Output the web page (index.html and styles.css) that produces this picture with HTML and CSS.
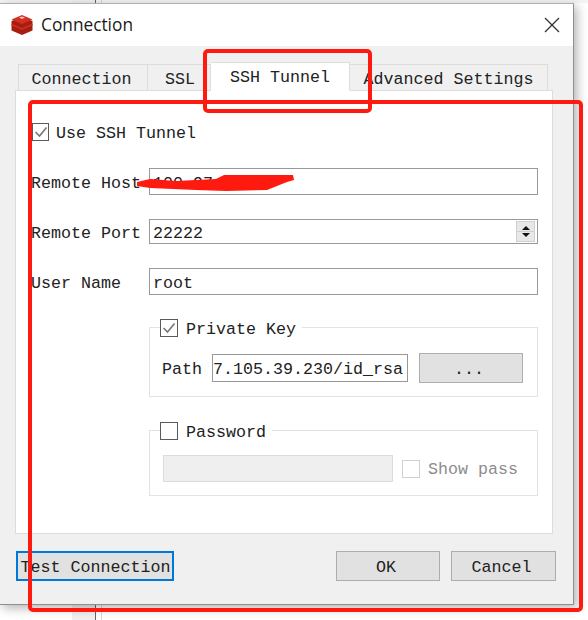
FILE: index.html
```html
<!DOCTYPE html>
<html lang="en">
<head>
<meta charset="utf-8">
<title>Connection</title>
<link rel="stylesheet" href="styles.css">
</head>
<body>
<div class="backdrop-top"><span class="bd-block"></span><span class="bd-line"></span><span class="bd-line2"></span></div>
<div class="window">
  <div class="titlebar">
    <svg class="app-icon" width="24" height="22" viewBox="0 0 24 22">
      <path d="M12 3 22.500 7v9.500L12 21 1.500 16.500V7Z" fill="#a41e11"/>
      <path d="M12 1 22.500 5.500 12 10 1.500 5.500Z" fill="#d82c20"/>
      <path d="M1.500 10.500 12 15l10.500-4.500" fill="none" stroke="#d82c20" stroke-width="1.500"/>
      <path d="M9 3.500 12 2.500l3 1-3 1.500Z" fill="#f5c9c4"/>
    </svg>
    <span class="title-text">Connection</span>
    <svg class="close-icon" width="16" height="16" viewBox="0 0 16 16">
      <path d="M1 1 15 15M15 1 1 15" stroke="#333" stroke-width="1.300" fill="none"/>
    </svg>
  </div>
  <div class="content">
    <div class="tabs">
      <div class="tab tab-conn">Connection</div>
      <div class="tab tab-ssl">SSL</div>
      <div class="tab tab-active">SSH Tunnel</div>
      <div class="tab tab-adv">Advanced Settings</div>
    </div>
    <div class="pane">
      <div class="check-row top-check">
        <span class="box box-small"><svg width="14" height="14" viewBox="0 0 14 14"><path d="M1.500 7 5.500 11 12.500 2.500" fill="none" stroke="#777" stroke-width="1.600"/></svg></span>
        <span class="txt">Use SSH Tunnel</span>
      </div>
      <div class="field first-field"><label class="lbl">Remote Host</label><div class="input tall">100.97.</div></div>
      <div class="field port-field"><label class="lbl">Remote Port</label>
        <div class="input short">22222
          <span class="spin"><span class="up"></span><span class="down"></span></span>
        </div>
      </div>
      <div class="field user-field"><label class="lbl">User Name</label><div class="input tall">root</div></div>
      <div class="group key-group">
        <div class="legend"><span class="box"><svg width="14" height="14" viewBox="0 0 14 14"><path d="M1.500 7 5.500 11 12.500 2.500" fill="none" stroke="#777" stroke-width="1.600"/></svg></span><span class="txt">Private Key</span></div>
        <div class="group-row path-row">
          <span class="path-lbl">Path</span>
          <div class="input path-input">7.105.39.230/id_rsa</div>
          <div class="btn browse">...</div>
        </div>
      </div>
      <div class="group pass-group">
        <div class="legend"><span class="box"></span><span class="txt">Password</span></div>
        <div class="group-row pass-row">
          <div class="pass-input"></div>
          <span class="box box-off"></span>
          <span class="off-text">Show pass</span>
        </div>
      </div>
    </div>
    <div class="footer">
      <div class="btn test">Test Connection</div>
      <div class="spacer"></div>
      <div class="btn ok">OK</div>
      <div class="btn cancel">Cancel</div>
    </div>
  </div>
</div>
<div class="backdrop-bottom"><span class="bd-block"></span><span class="bd-line"></span><span class="bd-line2"></span></div>
<div class="mark mark-tab"></div>
<div class="mark mark-pane"></div>
<svg class="scribble" width="160" height="18" viewBox="0 0 160 18">
  <path d="M1 8 14 5 40 7 80 5 88 1 157 1 158 6 151 8 131 16 90 17 60 16 14 14 1 12Z" fill="#fe1a0e"/>
</svg>
</body>
</html>
```
FILE: styles.css
```css
* { box-sizing: border-box; }
html, body { margin: 0; height: 620px; overflow: hidden; }
body {
  position: relative;
  background: #fff;
  font-family: "Liberation Mono", monospace;
  font-size: 16.670px;
  color: #222;
}
.backdrop-top { height: 3px; background: #f4f4f4; display: flex; position: relative; }
.backdrop-bottom { height: 15px; display: flex; }
.bd-block { width: 23px; margin-left: 72px; background: #f0f0f0; }
.bd-line { width: 1px; background: #666; }
.bd-line2 { width: 1px; margin-left: 5px; background: #d8d8d8; }
.window {
  width: 574px;
  height: 602px;
  border-right: 1px solid #8f8f8f;
  border-bottom: 1px solid #8f8f8f;
  border-top: 1px solid #b0b0b0;
  box-shadow: 3px 3px 10px rgba(0,0,0,.3);
  display: flex;
  flex-direction: column;
  position: relative;
}
.titlebar {
  height: 42px;
  background: #fff;
  display: flex;
  align-items: center;
  padding: 0 13px 0 10px;
}
.app-icon { margin-right: 7px; }
.title-text {
  font-family: "Open Sans", "Liberation Sans", sans-serif;
  font-size: 17.300px;
  color: #1a1a1a;
  flex: 1;
  padding-bottom: 2px;
}
.content { flex: 1; background: #f0f0f0; padding: 16px 0 0 15px; }
.tabs { display: flex; height: 29px; padding-left: 3px; align-items: flex-end; position: relative; z-index: 1; margin-bottom: -1px; }
.tab {
  height: 27px;
  border: 1px solid #dcdcdc;
  border-left: 0;
  background: #f0f0f0;
  display: flex;
  align-items: center;
  justify-content: center;
  padding-top: 4px;
}
.tab-conn { width: 130px; border-left: 1px solid #dcdcdc; padding-right: 3px; }
.tab-ssl { width: 63px; padding-left: 2px; }
.tab-active { width: 139px; height: 29px; background: #fff; border-bottom-color: #fff; padding-top: 1px; }
.tab-adv { width: 198px; }
.pane {
  width: 538px;
  height: 444px;
  background: #fff;
  border: 1px solid #dcdcdc;
  padding: 32px 14px 0 15px;
}
.check-row { display: flex; align-items: center; gap: 7px; height: 18px; margin-left: 1px; }
.txt { padding-top: 2px; }
.box {
  width: 18px;
  height: 18px;
  border: 1px solid #5a5a5a;
  background: #fff;
  display: flex;
  align-items: center;
  justify-content: center;
  flex: none;
}
.box-small { width: 17px; }
.field { display: flex; align-items: center; }
.first-field { margin-top: 27px; }
.port-field { margin-top: 24px; }
.user-field { margin-top: 24px; }
.lbl { width: 118px; flex: none; padding-top: 4px; }
.input {
  border: 1px solid #999;
  background: #fff;
  padding: 3px 0 0 3px;
  display: flex;
  align-items: center;
  position: relative;
}
.tall { width: 389px; height: 27px; }
.short { width: 389px; height: 25px; }
.spin {
  position: absolute;
  right: 2px;
  top: 1px;
  width: 19px;
  height: 21px;
  background: linear-gradient(#e8e8e8 0 9px, #cfcfcf 9px 10px, #e8e8e8 10px);
  border: 1px solid #d0d0d0;
  display: flex;
  flex-direction: column;
  align-items: center;
  justify-content: space-evenly;
}
.up { border: 4px solid transparent; border-top: 0; border-bottom: 4px solid #111; }
.down { border: 4px solid transparent; border-bottom: 0; border-top: 4px solid #111; }
.group {
  margin-left: 118px;
  width: 389px;
  border: 1px solid #e3e3e3;
  position: relative;
}
.key-group { margin-top: 32px; height: 70px; padding-top: 25px; }
.pass-group { margin-top: 33px; height: 66px; padding-top: 24px; }
.legend {
  position: absolute;
  left: 10px;
  top: -9px;
  display: flex;
  align-items: center;
  gap: 8px;
  background: #fff;
  padding-right: 6px;
  height: 18px;
}
.group-row { display: flex; align-items: center; }
.path-lbl { margin-left: 12px; width: 50px; flex: none; padding-top: 3px; }
.path-input { width: 196px; height: 28px; padding-left: 0; white-space: nowrap; overflow: hidden; }
.btn {
  background: #e1e1e1;
  border: 1px solid #adadad;
  display: flex;
  align-items: center;
  justify-content: center;
  padding: 3px 4px 0 0;
}
.browse { width: 104px; height: 30px; margin-left: 11px; }
.pass-input { margin-left: 13px; width: 230px; height: 27px; background: #efefef; border: 1px solid #dcdcdc; }
.box-off { border-color: #d0d0d0; margin-left: 9px; }
.off-text { color: #8c8c8c; margin-left: 8px; padding-top: 2px; }
.footer { display: flex; margin-top: 17px; height: 30px; width: 540px; margin-left: 1px; }
.test { width: 158px; border: 2px solid #0078d7; white-space: nowrap; padding: 3px 0 0 1px; }
.spacer { flex: 1; }
.ok { width: 104px; }
.cancel { width: 105px; margin-left: 11px; }
.mark {
  position: absolute;
  border: 4px solid #fe1a0e;
  border-radius: 5px;
  pointer-events: none;
  z-index: 5;
}
.mark-tab { left: 203px; top: 49px; width: 169px; height: 64px; }
.mark-pane { left: 28px; top: 100px; width: 555px; height: 512px; }
.scribble { position: absolute; left: 136px; top: 174px; z-index: 4; }
```
